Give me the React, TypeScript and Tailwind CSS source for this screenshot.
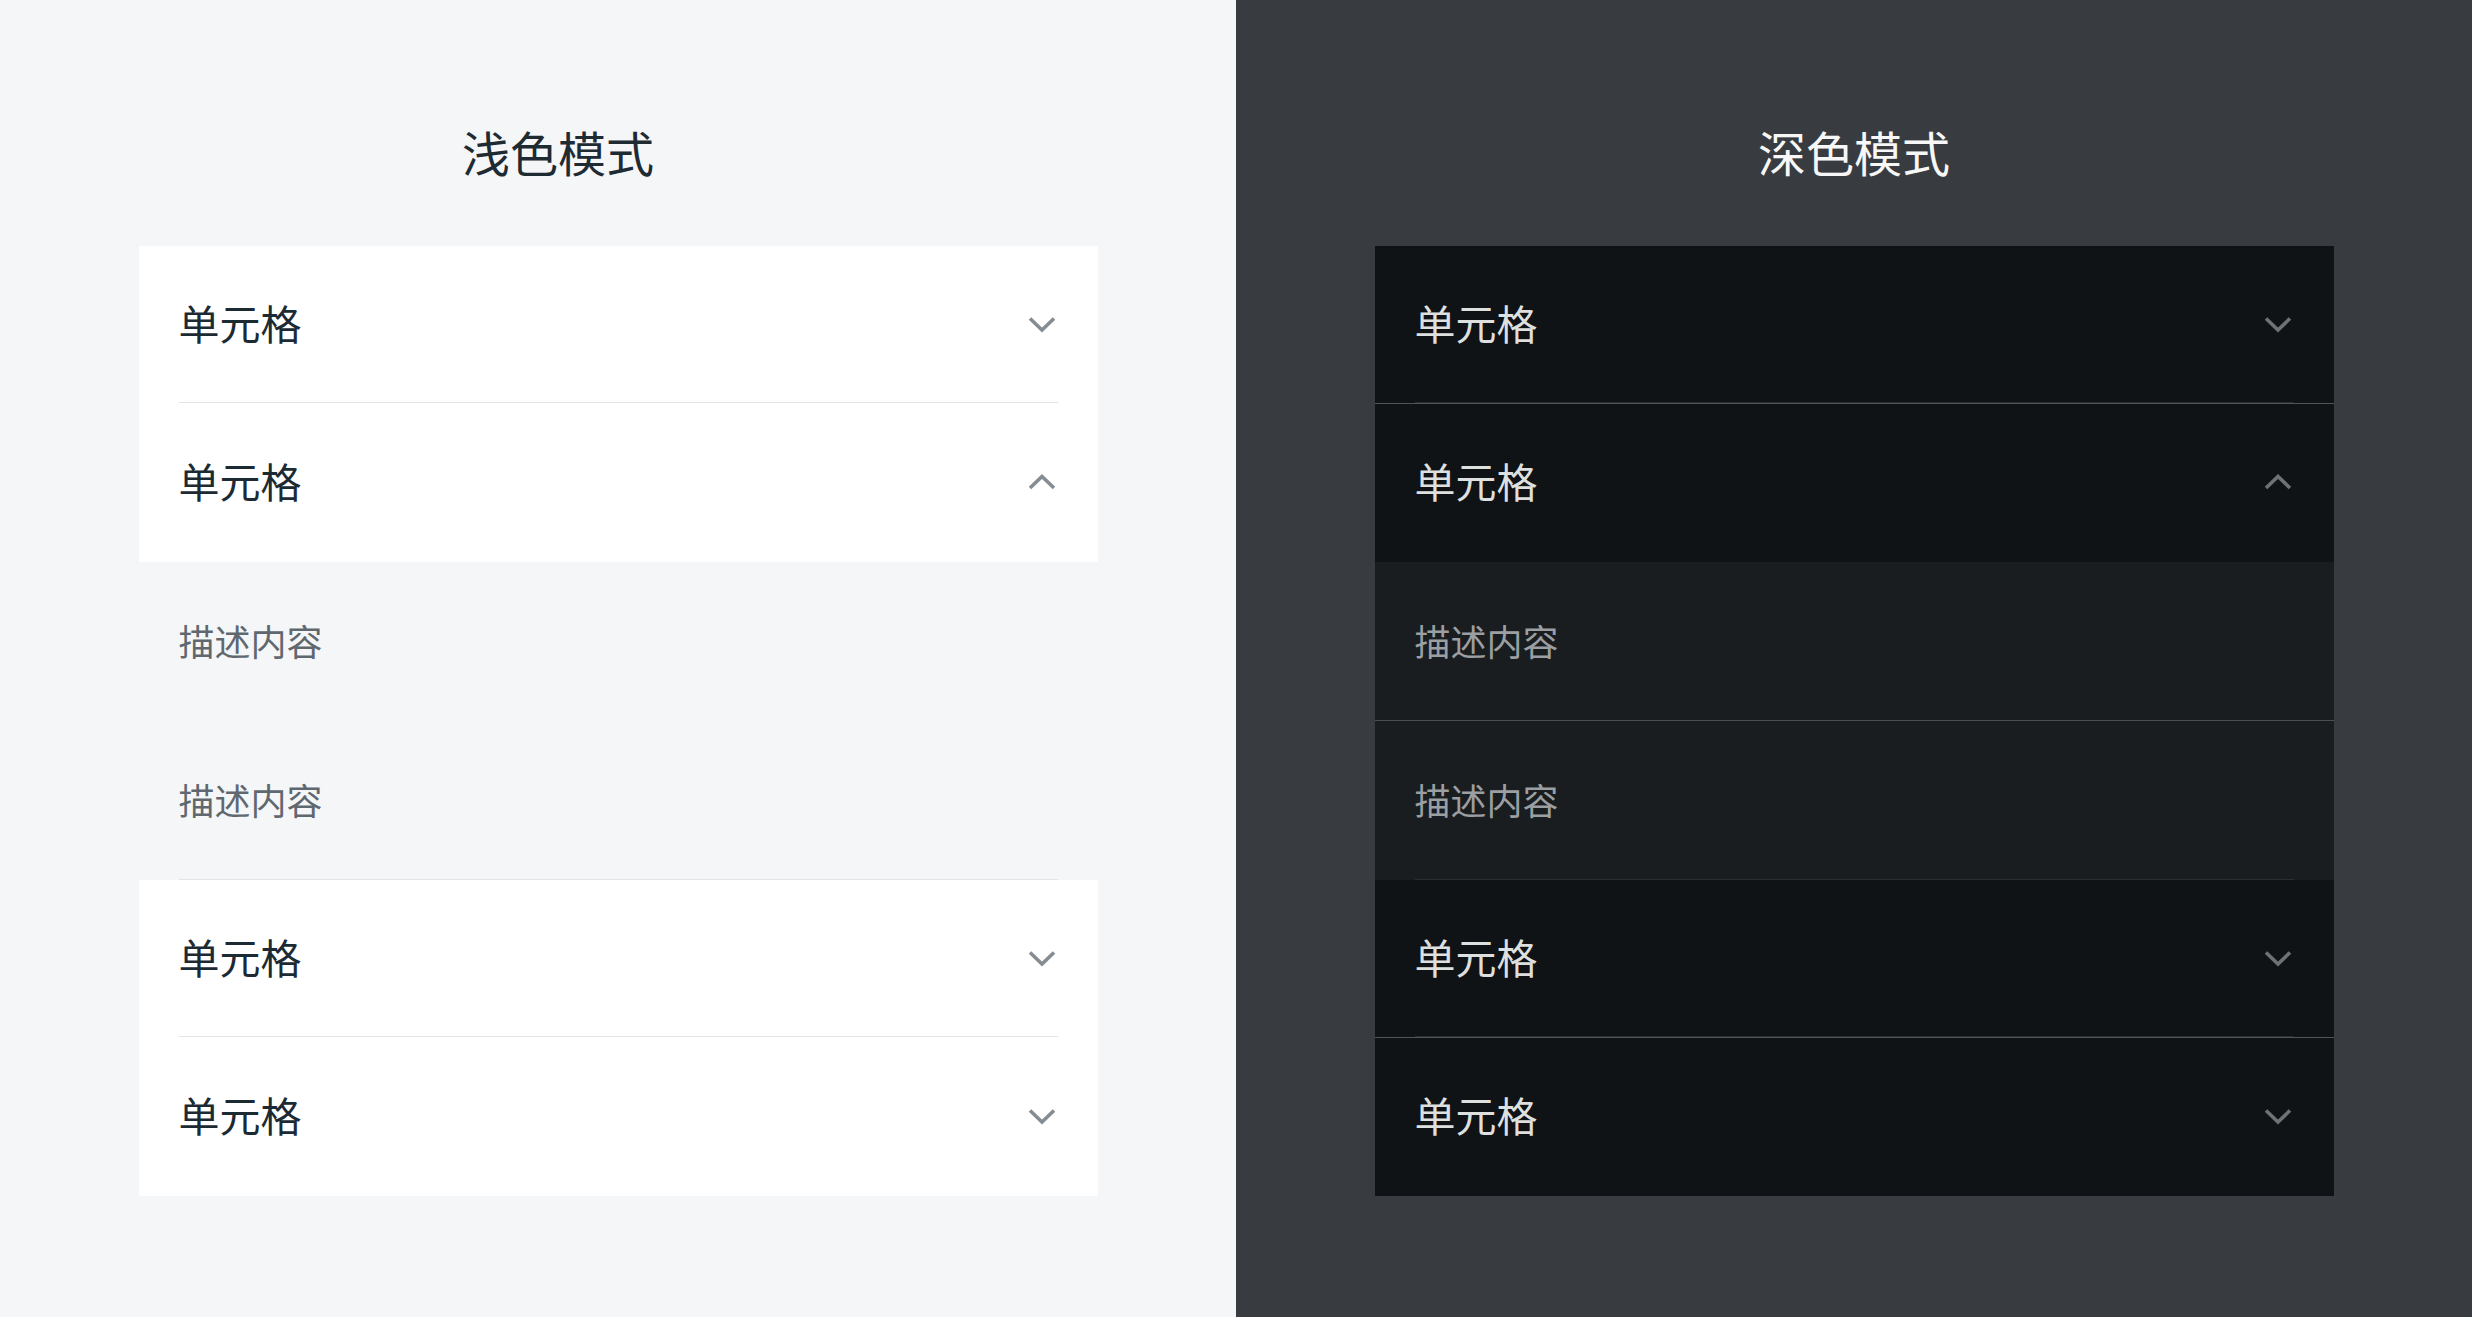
import type { ReactNode } from 'react';

type Theme = 'light' | 'dark';

const fontStack = { fontFamily: '"Noto Sans CJK SC", "Noto Sans", sans-serif' };

function Chevron({ up, color }: { up?: boolean; color: string }) {
  return (
    <svg width="32" height="32" viewBox="0 0 32 32" fill="none" className="shrink-0">
      <polyline
        points={up ? '4,23 16,11.5 28,23' : '4,11.5 16,23 28,11.5'}
        stroke={color}
        strokeWidth="3.6"
        strokeLinecap="butt"
        strokeLinejoin="miter"
      />
    </svg>
  );
}

function Cell({ theme, up, children }: { theme: Theme; up?: boolean; children?: ReactNode }) {
  const dark = theme === 'dark';
  return (
    <div className={`flex items-center justify-between h-[156px] px-[40px] pb-[3px] ${dark ? 'bg-[#0f1316]' : 'bg-white'}`}>
      <span className={`text-[41px] leading-none ${dark ? 'text-[#dedfdf]' : 'text-[#1c2a33]'}`}>单元格</span>
      <Chevron up={up} color={dark ? '#6f7275' : '#858c92'} />
      {children}
    </div>
  );
}

function Desc({ theme }: { theme: Theme }) {
  const dark = theme === 'dark';
  return (
    <div className={`flex items-center h-[158px] px-[40px] pb-[3px] ${dark ? 'bg-[#191d20]' : ''}`}>
      <span className={`text-[36px] leading-none ${dark ? 'text-[#9c9fa2]' : 'text-[#5f686f]'}`}>描述内容</span>
    </div>
  );
}

function Divider({ theme, full }: { theme: Theme; full?: boolean }) {
  const dark = theme === 'dark';
  if (full) return <div className="h-px bg-[#505357]" />;
  return (
    <div className={dark ? 'bg-[#0f1316] px-[40px]' : 'bg-white px-[40px]'}>
      <div className={`h-px ${dark ? 'bg-[#2a2e31]' : 'bg-[#e2e4e6]'}`} />
    </div>
  );
}

function Panel({ theme }: { theme: Theme }) {
  const dark = theme === 'dark';
  return (
    <div className={`flex flex-col items-center h-full ${dark ? 'bg-[#383c40]' : 'bg-[#f5f6f8]'}`}>
      <div className={`w-full flex justify-center pt-[119px] pb-[63px] ${dark ? '' : 'pr-[120px]'}`}>
        <h1 className={`text-[48px] leading-[64px] font-normal ${dark ? 'text-[#f7f7f7]' : 'text-[#1e2b33]'}`}>
          {dark ? '深色模式' : '浅色模式'}
        </h1>
      </div>

      <div className="w-[959px] flex flex-col">
        {/* first two cells */}
        <Cell theme={theme} />
        <Divider theme={theme} />
        {dark ? <Divider theme={theme} full /> : <div className="h-px bg-white" />}
        <Cell theme={theme} up />
        <div className={`h-[2px] ${dark ? 'bg-[#0f1316]' : 'bg-white'}`} />

        {/* expanded content */}
        <Desc theme={theme} />
        {dark ? <div className="h-px bg-[#4a4e52]" /> : <div className="h-px" />}
        <Desc theme={theme} />

        {/* remaining cells */}
        <div className={dark ? 'bg-[#191d20] px-[40px]' : 'px-[40px]'}>
          <div className={`h-px ${dark ? 'bg-[#2a2e31]' : 'bg-[#e2e4e6]'}`} />
        </div>
        <Cell theme={theme} />
        <Divider theme={theme} />
        {dark ? <Divider theme={theme} full /> : <div className="h-px bg-white" />}
        <Cell theme={theme} />
        <div className={`h-[2px] ${dark ? 'bg-[#0f1316]' : 'bg-white'}`} />
      </div>
    </div>
  );
}

export default function App() {
  return (
    <div className="grid grid-cols-2 h-screen w-full" style={fontStack}>
      <Panel theme="light" />
      <Panel theme="dark" />
    </div>
  );
}
